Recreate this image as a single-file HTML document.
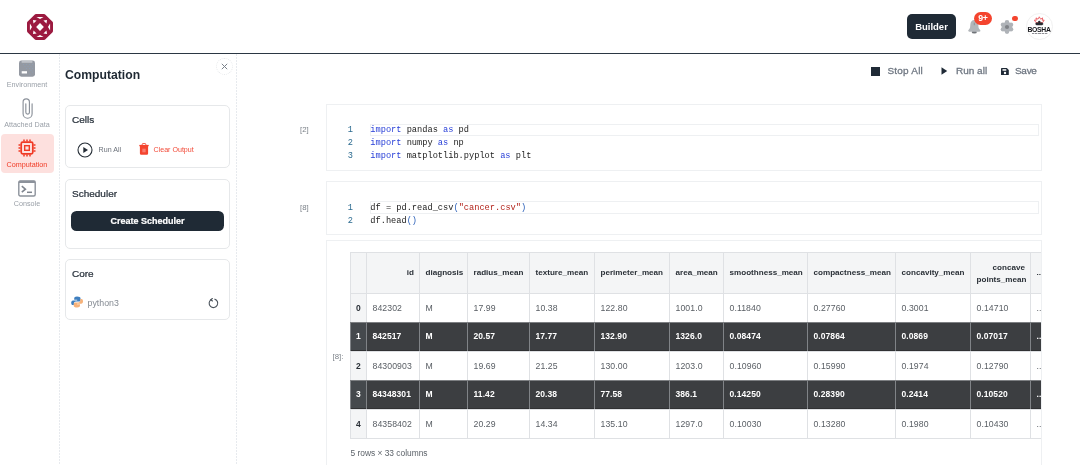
<!DOCTYPE html>
<html>
<head>
<meta charset="utf-8">
<title>Computation</title>
<style>
*{box-sizing:border-box;margin:0;padding:0}
html,body{width:1080px;height:465px;overflow:hidden;background:#fff;position:relative;font-family:"Liberation Sans",sans-serif;color:#1f2933}
body{will-change:transform}
.abs{position:absolute}
#hdr{position:absolute;left:0;top:0;width:1080px;height:53px;background:#fff}
#hline{position:absolute;left:0;top:52.5px;width:1080px;height:1.5px;background:#2b3743}
#builder{position:absolute;left:907px;top:14px;width:49px;height:25px;border-radius:5px;background:#1f2a35;color:#fff;font-weight:bold;font-size:9.5px;line-height:26px;text-align:center}
#side{position:absolute;left:0;top:54px;width:60px;height:411px}
.vd{position:absolute;top:0;right:0;width:1px;height:411px;background:repeating-linear-gradient(180deg,#e7eaee 0 2px,#fff 2px 3px)}
.nav{position:absolute;left:0;width:54px;text-align:center;font-size:7.2px;color:#9aa0a8}
#panel{position:absolute;left:60px;top:54px;width:177px;height:411px}
.card{position:absolute;left:5px;width:165px;border:1px solid #e6e8ea;border-radius:5px;background:#fff}
.card h4{position:absolute;left:6px;font-size:10px;font-weight:normal;color:#2a333d;-webkit-text-stroke:0.25px #2a333d;transform:scaleY(0.92);transform-origin:0 60%}
.tb{position:absolute;top:65px;font-size:10px;color:#6f7782;line-height:12px;-webkit-text-stroke:0.3px #6f7782;transform:scaleY(0.9);transform-origin:50% 60%}
.cell{position:absolute;left:326px;width:716px;border:1px solid #eef0f2;background:#fff}
.hl{position:absolute;left:43px;width:669px;height:12.5px;border:1px solid #eef0f2}
.lbl{position:absolute;font-size:7.8px;color:#7b8188}
.code{position:absolute;left:43.3px;font-family:"Liberation Mono",monospace;font-size:8.67px;line-height:13px;white-space:pre;color:#222}
.ln{position:absolute;left:20px;width:6px;text-align:right;font-family:"Liberation Mono",monospace;font-size:8.67px;line-height:13px;color:#2b6a8f;white-space:pre}
.k{color:#2a41d8}.s{color:#b3261e}.p{color:#2a5fb8}
table{position:absolute;letter-spacing:0.08px;left:23px;top:11px;width:700px;border-collapse:collapse;font-size:8.7px;color:#595e64;table-layout:fixed}
td,th{border:1px solid #dfe1e4;padding:0 0 1px 5.5px;height:29px;text-align:left;white-space:nowrap;overflow:hidden}
th{background:#f4f5f6;color:#2a3037;font-weight:bold;height:41px;font-size:8.1px;letter-spacing:0}
td.i{font-weight:bold;color:#2a3037;padding-left:5px;background:#f4f5f6;font-size:8.5px}
tr.d td{font-size:8.5px}
tr.b td{border-bottom-color:#7d7f82}
tr.d td{background:#3c3e41;color:#fff;font-weight:bold;padding-bottom:2px;border-left-color:#808387;border-right-color:#808387;box-shadow:inset 0 -1px 0 #303133}
tr.d td.i{background:#45494d}
</style>
</head>
<body>
<div id="hdr">
  <svg class="abs" style="left:26.900px;top:13.700px" width="26" height="26" viewBox="0 0 26 26">
    <path d="M8.900 1.500h8.200l7.400 7.400v8.200l-7.400 7.400h-8.200l-7.400-7.400v-8.200z" fill="#9c1a40" stroke="#9c1a40" stroke-width="3" stroke-linejoin="round"/>
    <path d="M13 9.100l3.900 3.900-3.900 3.900-3.900-3.900z" fill="#fff"/>
    <path d="M9.400 2.900h7.200l-3.600 2.100zM9.400 23.100h7.200l-3.600-2.100zM2.900 9.400v7.200l2.100-3.600zM23.100 9.400v7.200l-2.100-3.600z" fill="#fff"/>
    <path d="M6 6l3.600 0.500-3.100 3.100zM20 6l-3.600 0.500 3.100 3.100zM6 20l3.600-0.500-3.100-3.100zM20 20l-3.600-0.500 3.100-3.100z" fill="#fff"/>
  </svg>
  <div id="builder">Builder</div>
  <!-- bell -->
  <svg class="abs" style="left:968px;top:20px" width="13" height="14" viewBox="0 0 13 14">
    <ellipse cx="6.300" cy="12" rx="2.600" ry="1.500" fill="#6f7378"/>
    <path d="M6.300 0c-2.300 0-3.700 1.700-3.900 4l-0.300 3.300c-0.100 1-0.600 1.700-1.400 2.500c-0.900 0.900-0.500 1.900 0.600 1.900h10c1.100 0 1.500-1 0.600-1.900c-0.800-0.800-1.300-1.500-1.400-2.500l-0.300-3.300c-0.200-2.300-1.600-4-3.900-4z" fill="#b2b6ba"/>
    <path d="M6.300 2.600v2.600" stroke="#7d8186" stroke-width="0.700"/>
  </svg>
  <div class="abs" style="left:974px;top:12.200px;width:18px;height:13px;border-radius:6.500px;background:#f4442e;color:#fff;font-size:8.800px;font-weight:bold;line-height:13px;text-align:center;letter-spacing:-0.200px">9+</div>
  <!-- gear -->
  <svg class="abs" style="left:1000.400px;top:19.800px" width="14" height="14" viewBox="-7 -7 14 14">
    <g fill="#afb3b8">
      <circle cx="0" cy="0" r="4.900"/>
      <circle cx="0" cy="-4.600" r="2.300"/><circle cx="0" cy="4.600" r="2.300"/>
      <circle cx="-3.980" cy="-2.300" r="2.300"/><circle cx="3.980" cy="-2.300" r="2.300"/>
      <circle cx="-3.980" cy="2.300" r="2.300"/><circle cx="3.980" cy="2.300" r="2.300"/>
    </g>
    <circle cx="0" cy="0" r="2.100" fill="#7f8287"/>
  </svg>
  <div class="abs" style="left:1012.200px;top:15.700px;width:5.800px;height:5.800px;border-radius:3px;background:#f4442e"></div>
  <!-- avatar -->
  <div class="abs" style="left:1026px;top:13.200px;width:26.500px;height:26.500px;border-radius:14px;border:1px solid #f1f1f1;background:#fff;overflow:hidden">
    <svg class="abs" style="left:0;top:0" width="25" height="25" viewBox="0 0 25 25">
      <path d="M12.300 2.800l1.300 2.400 2-1.300-0.300 2.400 1.900-0.300-1.500 2.600h-6.800l-1.500-2.600 1.900 0.300-0.300-2.400 2 1.300z" fill="none" stroke="#e8474c" stroke-width="0.800" stroke-linejoin="round"/>
      <path d="M9.300 8.600h6l1.200 1.400-1.400 1.200h-5.600l-1.400-1.200z" fill="#2a2a30"/>
      <circle cx="12.300" cy="8" r="1.200" fill="#2a2a30"/>
    </svg>
    <div class="abs" style="left:0.500px;top:11.900px;width:30px;font-size:6.800px;font-weight:bold;color:#17171c;letter-spacing:-0.300px;white-space:nowrap;line-height:8px">BOSHA</div>
    <div class="abs" style="left:4.500px;top:18.800px;width:16.500px;height:1.300px;background:repeating-linear-gradient(90deg,#8d8d92 0 2.200px,#d9d9dc 2.200px 3.200px)"></div>
  </div>
</div>
<div id="hline"></div>

<div id="side">
  <div class="vd"></div>
  <!-- environment -->
  <svg class="abs" style="left:19px;top:6.300px" width="16" height="17" viewBox="0 0 16 17">
    <rect x="0" y="0.500" width="16" height="16.200" rx="2.400" fill="#9499a2"/>
    <rect x="2.600" y="1.500" width="10.800" height="0.900" fill="#e9ebee"/>
    <rect x="2.700" y="11.200" width="5.300" height="2.300" fill="#fff"/>
    <g fill="#7fb0dc"><circle cx="4.500" cy="4.500" r="0.350"/><circle cx="7.500" cy="4.500" r="0.350"/><circle cx="10.500" cy="4.500" r="0.350"/><circle cx="13.300" cy="4.500" r="0.350"/><circle cx="6" cy="6.500" r="0.350"/><circle cx="9" cy="6.500" r="0.350"/><circle cx="12" cy="6.500" r="0.350"/><circle cx="7.500" cy="8.500" r="0.350"/><circle cx="10.500" cy="8.500" r="0.350"/><circle cx="13.300" cy="8.500" r="0.350"/><circle cx="12" cy="10.500" r="0.350"/><circle cx="13.300" cy="12" r="0.350"/><circle cx="11" cy="14" r="0.350"/></g>
  </svg>
  <div class="nav" style="top:26px">Environment</div>
  <!-- clip -->
  <svg class="abs" style="left:21px;top:44px" width="13" height="22" viewBox="0 0 13 22">
    <path d="M11.100 5.700V15.700A4.500 4.500 0 0 1 2.100 15.700V3.960A3.160 3.160 0 0 1 8.420 3.960V14.300A1.800 1.800 0 0 1 4.820 14.300V5.700" fill="none" stroke="#8a9099" stroke-width="1.150" stroke-linecap="round"/>
  </svg>
  <div class="nav" style="top:66.300px">Attached Data</div>
  <!-- computation active -->
  <div class="abs" style="left:1px;top:80px;width:53px;height:39px;border-radius:4px;background:#fde0de"></div>
  <svg class="abs" style="left:18px;top:85px" width="18" height="18" viewBox="0 0 18 18">
    <g stroke="#f03a25" fill="none">
      <rect x="3.200" y="3.200" width="11.600" height="11.600" rx="1.500" stroke-width="1.700"/>
      <rect x="6.700" y="6.700" width="4.600" height="4.600" stroke-width="1.400"/>
      <path d="M6 0.500v2M9 0.500v2M12 0.500v2M6 15.500v2M9 15.500v2M12 15.500v2M0.500 6h2M0.500 9h2M0.500 12h2M15.500 6h2M15.500 9h2M15.500 12h2" stroke-width="1.500"/>
    </g>
  </svg>
  <div class="nav" style="top:106px;color:#f03a25">Computation</div>
  <!-- console -->
  <svg class="abs" style="left:18px;top:125.500px" width="18" height="17" viewBox="0 0 18 17">
    <rect x="0.800" y="1" width="16.400" height="15" rx="1.500" fill="none" stroke="#8c929b" stroke-width="1.400"/>
    <rect x="0.800" y="0.800" width="16.400" height="2.200" fill="#8c929b"/>
    <path d="M3.800 6.200l3.600 3-3.600 3" fill="none" stroke="#7f858e" stroke-width="1.600"/>
    <path d="M9 12.300h5" stroke="#7f858e" stroke-width="1.500"/>
  </svg>
  <div class="nav" style="top:145px">Console</div>
</div>

<div id="panel">
  <div class="vd"></div>
  <div class="abs" style="left:5px;top:13.500px;font-size:12.200px;font-weight:bold;color:#1f2933">Computation</div>
  <div class="abs" style="left:156px;top:3.600px;width:17.400px;height:17.400px;border-radius:9px;border:1px dotted #e6e8ea"></div>
  <svg class="abs" style="left:161.200px;top:8.800px" width="7" height="7" viewBox="0 0 7 7"><path d="M0.800 0.800l5.400 5.400M6.200 0.800l-5.400 5.400" stroke="#7a818a" stroke-width="1"/></svg>

  <div class="card" style="top:51px;height:63px">
    <h4 style="top:7.500px">Cells</h4>
    <svg class="abs" style="left:11px;top:36px" width="16" height="16" viewBox="0 0 16 16"><circle cx="8" cy="8" r="7" fill="none" stroke="#252d36" stroke-width="1.100"/><path d="M6.300 5v6l4.700-3z" fill="#252d36"/></svg>
    <div class="abs" style="left:32.600px;top:40px;font-size:7.100px;color:#6a7079">Run All</div>
    <svg class="abs" style="left:73.300px;top:37.300px" width="10" height="12" viewBox="0 0 10 12"><path d="M3.200 2v-0.600a0.900 0.900 0 0 1 0.900-0.900h1.800a0.900 0.900 0 0 1 0.900 0.900v0.600" fill="none" stroke="#f4442e" stroke-width="0.900"/><path d="M0.300 1.900h9.400v1.300h-9.400z" fill="#f4442e"/><path d="M0.900 3h8.200v7.600a1.200 1.200 0 0 1-1.200 1.200h-5.800a1.200 1.200 0 0 1-1.200-1.200z" fill="#f4442e"/><path d="M4.100 5.700v3.600M5.900 5.700v3.600" stroke="#fcc" stroke-width="0.700"/></svg>
    <div class="abs" style="left:87.500px;top:40px;font-size:7.100px;color:#f24a38">Clear Output</div>
  </div>

  <div class="card" style="top:125px;height:70px">
    <h4 style="top:7.500px">Scheduler</h4>
    <div class="abs" style="left:5px;top:31px;width:153px;height:20px;border-radius:5.500px;background:#1f2a35;color:#fff;font-size:9px;font-weight:bold;line-height:20px;-webkit-text-stroke:0.200px #fff;text-align:center">Create Scheduler</div>
  </div>

  <div class="card" style="top:205px;height:60.500px">
    <h4 style="top:7.500px">Core</h4>
    <svg class="abs" style="left:5.300px;top:36.400px" width="12" height="12" viewBox="0 0 12 12">
      <path d="M6 0.500c-2 0-2.800 0.800-2.800 2v1.300h3v0.600h-4.200c-1.200 0-1.800 1-1.800 2.400s0.600 2.300 1.700 2.300h1v-1.500c0-1.200 0.900-2 2-2h3c0.900 0 1.600-0.700 1.600-1.600v-1.700c0-1.100-1.200-1.800-3.500-1.800z" fill="#3f7fbf"/>
      <path d="M6.200 11.600c2 0 2.800-0.800 2.800-2v-1.300h-3v-0.600h4.200c1.200 0 1.800-1 1.800-2.400s-0.600-2.300-1.700-2.300h-1v1.500c0 1.200-0.900 2-2 2h-3c-0.900 0-1.600 0.700-1.600 1.600v1.700c0 1.100 1.200 1.800 3.500 1.800z" fill="#f6b27a"/>
    </svg>
    <div class="abs" style="left:21.500px;top:37.800px;font-size:8.800px;color:#858b93">python3</div>
    <svg class="abs" style="left:141.500px;top:37.700px" width="11" height="11" viewBox="0 0 11 11"><path d="M3.200 1.600a4.300 4.300 0 1 0 3.300-0.500" fill="none" stroke="#4a525b" stroke-width="1.100"/><path d="M4.700 0.200l-2 1.500 2.100 1.500" fill="none" stroke="#4a525b" stroke-width="1.100"/></svg>
  </div>
</div>

<!-- toolbar -->
<div class="abs" style="left:870.500px;top:66.500px;width:9.500px;height:9px;background:#1f2a36"></div>
<div class="tb" style="left:887.500px;letter-spacing:0.200px">Stop All</div>
<svg class="abs" style="left:941px;top:67px" width="7" height="8" viewBox="0 0 7 8"><path d="M0.500 0.300l5.700 3.700-5.700 3.700z" fill="#1f2a36"/></svg>
<div class="tb" style="left:956px">Run all</div>
<svg class="abs" style="left:1001px;top:67.500px" width="8" height="7.500" viewBox="0 0 8 7.500"><path d="M0.800 0h5l2 2v4.700a0.800 0.800 0 0 1-0.800 0.800h-6.200a0.800 0.800 0 0 1-0.800-0.800v-5.900a0.800 0.800 0 0 1 0.800-0.800z" fill="#1f2a36"/><rect x="1.500" y="1.200" width="3.800" height="1.500" fill="#fff"/><circle cx="4" cy="5" r="1.200" fill="#fff"/></svg>
<div class="tb" style="left:1015px;letter-spacing:-0.300px">Save</div>

<!-- cell 1 -->
<div class="lbl" style="left:300px;top:124.500px">[2]</div>
<div class="cell" style="top:104px;height:67px">
  <div class="hl" style="top:18.500px"></div>
  <div class="ln" style="top:18.800px">1
2
3</div>
  <div class="code" style="top:18.800px"><span class="k">import</span> pandas <span class="k">as</span> pd
<span class="k">import</span> numpy <span class="k">as</span> np
<span class="k">import</span> matplotlib.pyplot <span class="k">as</span> plt</div>
</div>

<!-- cell 2 -->
<div class="lbl" style="left:300px;top:202.500px">[8]</div>
<div class="cell" style="top:181px;height:54px">
  <div class="hl" style="top:19px"></div>
  <div class="ln" style="top:19.600px">1
2</div>
  <div class="code" style="top:19.600px">df = pd.read_csv<span class="p">(</span><span class="s">"cancer.csv"</span><span class="p">)</span>
df.head<span class="p">()</span></div>
</div>

<!-- output -->
<div class="cell" style="top:240px;height:240px;overflow:hidden">
  <div class="lbl" style="left:5.500px;top:111px">[8]:</div>
  <table>
    <colgroup><col style="width:16px"><col style="width:53px"><col style="width:48px"><col style="width:62px"><col style="width:65px"><col style="width:75px"><col style="width:54px"><col style="width:84px"><col style="width:88px"><col style="width:75px"><col style="width:60px"><col style="width:20px"></colgroup>
    <tr><th></th><th style="text-align:right;padding-right:5px">id</th><th>diagnosis</th><th>radius_mean</th><th>texture_mean</th><th>perimeter_mean</th><th>area_mean</th><th>smoothness_mean</th><th>compactness_mean</th><th>concavity_mean</th><th style="text-align:right;padding-right:5px;padding-top:2px;line-height:11.900px;white-space:normal">concave points_mean</th><th>...</th></tr>
    <tr class="b"><td class="i">0</td><td>842302</td><td>M</td><td>17.99</td><td>10.38</td><td>122.80</td><td>1001.0</td><td>0.11840</td><td>0.27760</td><td>0.3001</td><td>0.14710</td><td>...</td></tr>
    <tr class="d"><td class="i">1</td><td>842517</td><td>M</td><td>20.57</td><td>17.77</td><td>132.90</td><td>1326.0</td><td>0.08474</td><td>0.07864</td><td>0.0869</td><td>0.07017</td><td>...</td></tr>
    <tr class="b"><td class="i">2</td><td>84300903</td><td>M</td><td>19.69</td><td>21.25</td><td>130.00</td><td>1203.0</td><td>0.10960</td><td>0.15990</td><td>0.1974</td><td>0.12790</td><td>...</td></tr>
    <tr class="d"><td class="i">3</td><td>84348301</td><td>M</td><td>11.42</td><td>20.38</td><td>77.58</td><td>386.1</td><td>0.14250</td><td>0.28390</td><td>0.2414</td><td>0.10520</td><td>...</td></tr>
    <tr><td class="i">4</td><td>84358402</td><td>M</td><td>20.29</td><td>14.34</td><td>135.10</td><td>1297.0</td><td>0.10030</td><td>0.13280</td><td>0.1980</td><td>0.10430</td><td>...</td></tr>
  </table>
  <div class="abs" style="left:23.500px;top:206.500px;font-size:8.400px;color:#5d636a">5 rows × 33 columns</div>
</div>
</body>
</html>
